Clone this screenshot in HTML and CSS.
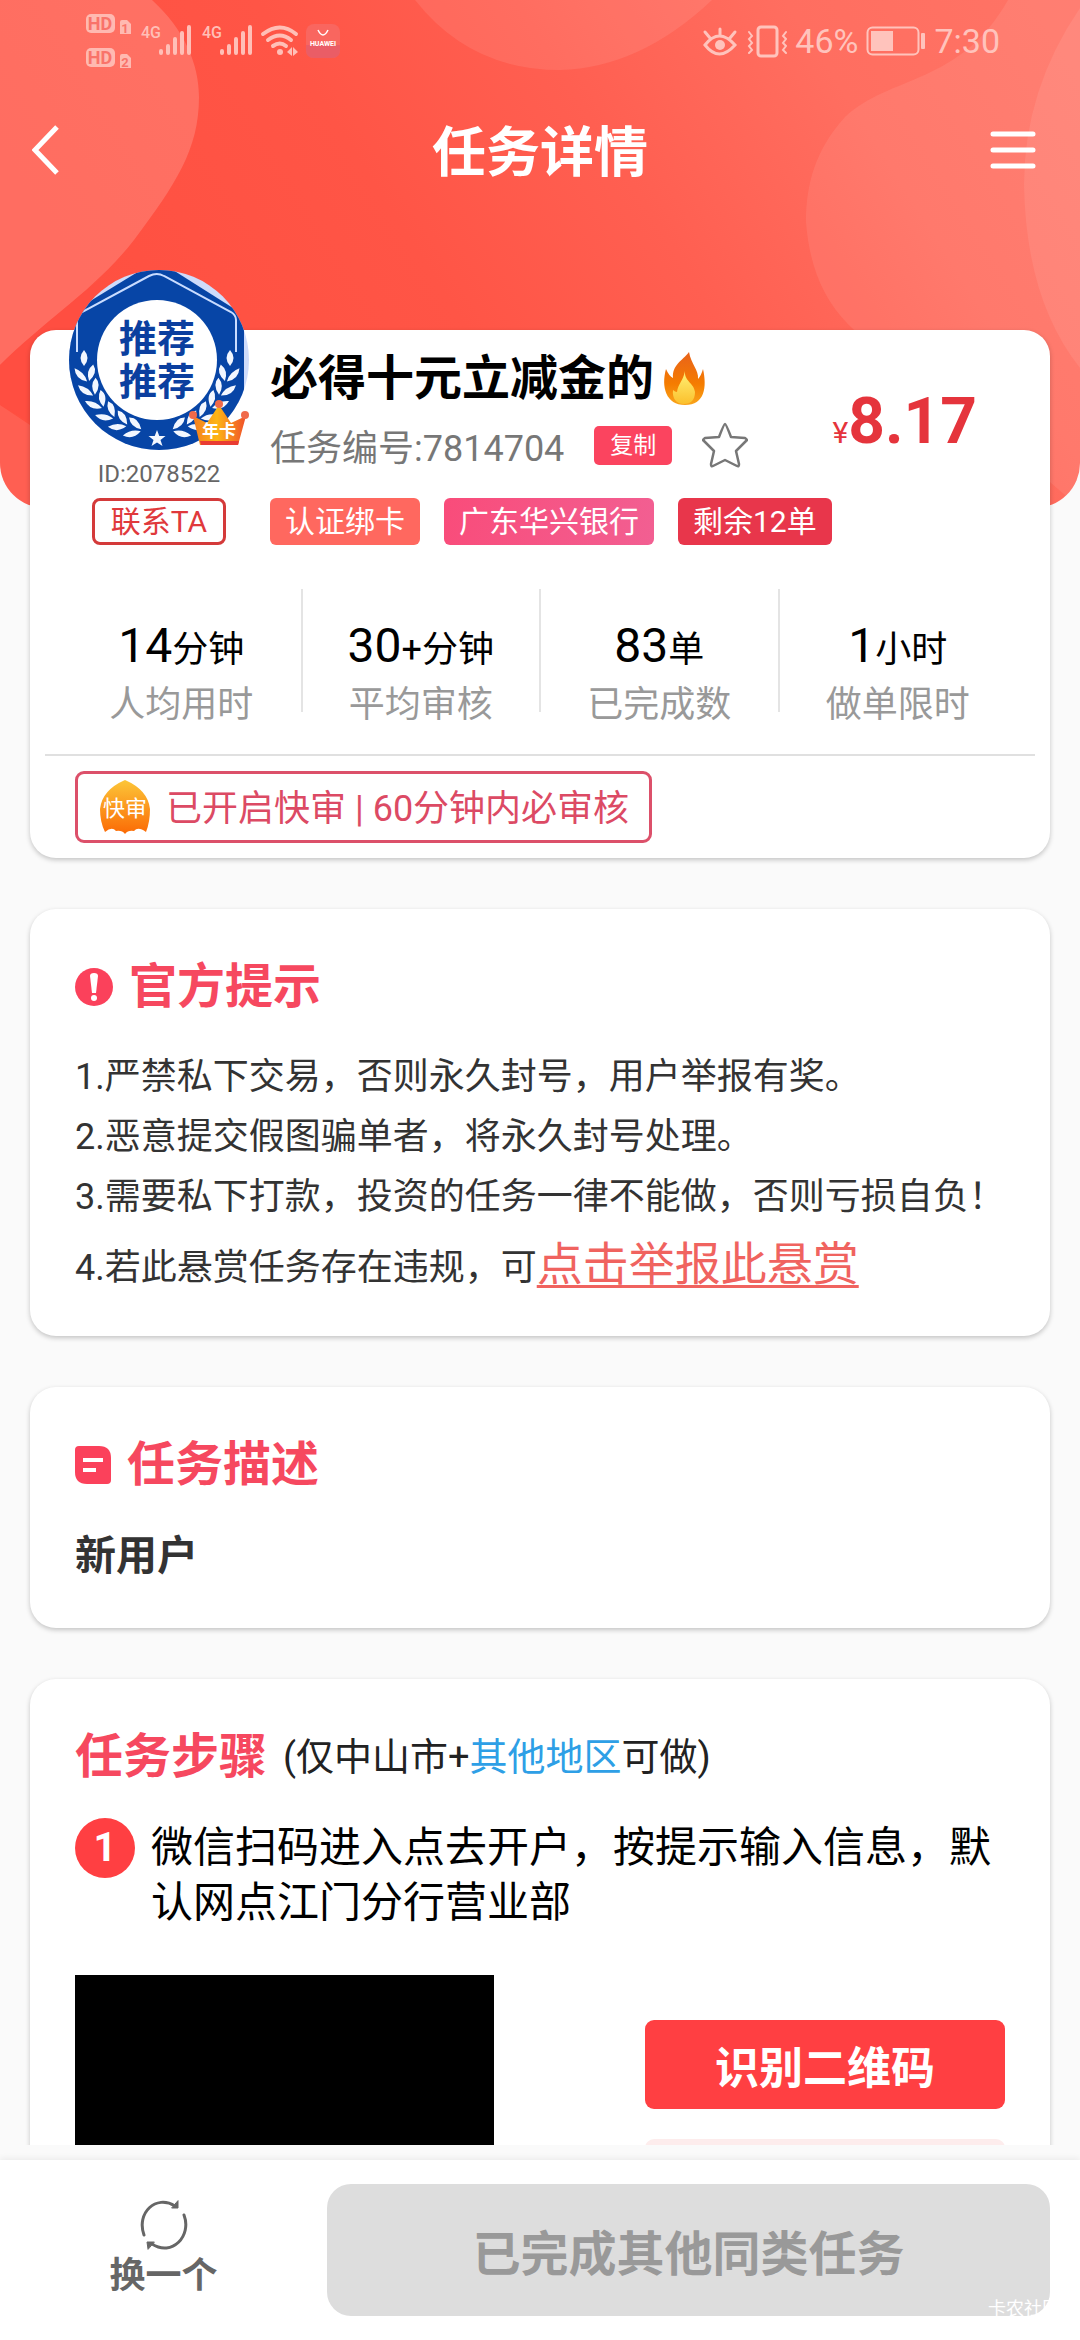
FILE: index.html
```html
<!DOCTYPE html>
<html lang="zh-CN">
<head>
<meta charset="utf-8">
<meta name="viewport" content="width=device-width, initial-scale=1">
<title>任务详情</title>
<link rel="stylesheet" href="styles.css">
</head>
<body>
<main class="scroller">
  <header class="hero">
    <svg class="hero-art" viewBox="0 0 1080 508" preserveAspectRatio="none" aria-hidden="true">
      <defs>
        <linearGradient id="base" x1="0" y1="0.3" x2="1" y2="0">
          <stop offset="0" stop-color="#ff5041"/>
          <stop offset="0.3" stop-color="#ff5546"/>
          <stop offset="0.52" stop-color="#ff5f51"/>
          <stop offset="0.75" stop-color="#ff6e60"/>
          <stop offset="1" stop-color="#ff7466"/>
        </linearGradient>
      </defs>
      <rect width="1080" height="508" fill="url(#base)"/>
      <path d="M0 0H152C185 30 199 65 199 97C199 150 175 185 134 240C95 290 45 320 0 365Z" fill="#fff" fill-opacity=".17"/>
      <path d="M0 365Q60 310 100 280V460L0 405Z" fill="#ff4b42" fill-opacity=".5"/>
      <path d="M0 405L60 445V508H0Z" fill="#fff" fill-opacity=".09"/>
      <path d="M415 0Q470 70 560 70Q640 68 712 0Z" fill="#fff" fill-opacity=".09"/>
      <path d="M1008 0C960 85 890 75 845 117C815 150 806 185 806 222C812 300 850 340 920 370L1080 508V0Z" fill="#fff" fill-opacity=".08"/>
      <path d="M1080 8Q1024 90 1024 185Q1026 300 1080 368Z" fill="#fff" fill-opacity=".08"/>
    </svg>
    <div class="status">
      <svg class="status-left" width="256" height="75" viewBox="0 0 256 75" aria-hidden="true">
        <g fill="#ffb9b1">
          <rect x="0" y="14" width="29" height="19" rx="5"/>
          <rect x="0" y="48" width="29" height="19" rx="5"/>
          <path d="M34 22q0-2 2-2h5l4 4v10H34zM34 56q0-2 2-2h5l4 4v10H34z"/>
        </g>
        <g class="status-cut"><text x="14" y="30" font-size="18" text-anchor="middle">HD</text><text x="14" y="64" font-size="18" text-anchor="middle">HD</text><text x="39" y="33" font-size="13" text-anchor="middle">1</text><text x="39" y="67" font-size="13" text-anchor="middle">2</text></g>
        <g class="status-net"><text x="55" y="38" font-size="16">4G</text><text x="116" y="38" font-size="16">4G</text></g>
        <g stroke="#ffbfb7" stroke-width="4" stroke-linecap="round">
          <path d="M75 51v2M82 46v7M89 39v14M96 33v20M103 27v26"/>
          <path d="M136 51v2M143 46v7M150 39v14M157 33v20M164 27v26"/>
        </g>
        <g fill="none" stroke="#ffbfb7" stroke-width="4" stroke-linecap="round">
          <path d="M177 34q17-13 33 0M182 40q12-9 23 0M187 46q7-5 13 0"/>
        </g>
        <circle cx="194" cy="52" r="3" fill="#ffbfb7"/>
        <path d="M206 47v9l-5-4zM207 47v9l5-4z" fill="#ffbfb7"/>
        <rect x="220" y="24" width="34" height="34" rx="8" fill="#f9665f"/>
        <path d="M220 45h34v5q0 8-8 8h-18q-8 0-8-8z" fill="#ea5d66"/>
        <path d="M232 30q5 10 10 0" fill="none" stroke="#fff" stroke-width="1.5"/>
        <text x="237" y="46" class="status-brand" text-anchor="middle" font-size="7">HUAWEI</text>
      </svg>
      <div class="status-right">
        <svg width="86" height="36" viewBox="0 0 86 36" fill="none" stroke="#ffc3bc" stroke-width="3" stroke-linecap="round" aria-hidden="true">
          <path d="M4 22Q18 4 34 22Q18 40 4 22ZM19 12V6M9 15L4 9M29 15L34 9"/>
          <circle cx="19" cy="22" r="5" fill="#ffc3bc" stroke="none"/>
          <rect x="57" y="4" width="19" height="29" rx="3"/>
          <path d="M48 9l3 4-3 3 3 4-3 3 3 4-3 3M85 9l-3 4 3 3-3 4 3 3-3 4 3 3" stroke-width="2"/>
        </svg>
        <span>46%</span>
        <svg width="60" height="32" viewBox="0 0 60 32" aria-hidden="true">
          <rect x="1.500" y="2.500" width="51" height="27" rx="5" fill="none" stroke="#ffc3bc" stroke-width="2"/>
          <rect x="5" y="6" width="22" height="20" fill="#ffc3bc"/>
          <rect x="55" y="8" width="4" height="16" rx="1" fill="#ffc3bc"/>
        </svg>
        <span>7:30</span>
      </div>
    </div>
    <nav class="nav">
      <button class="nav-btn" type="button" aria-label="返回">
        <svg width="27" height="50" viewBox="0 0 27 50" fill="none" stroke="#fff" stroke-width="5"><path d="M25 2L3 25L25 48"/></svg>
      </button>
      <h1 class="nav-title">任务详情</h1>
      <button class="nav-btn nav-menu" type="button" aria-label="菜单">
        <svg width="46" height="40" viewBox="0 0 46 40" stroke="#fff" stroke-width="5" stroke-linecap="round"><path d="M3 4H43M3 20H43M3 36H43"/></svg>
      </button>
    </nav>
  </header>

  <div class="cards">
    <section class="card summary">
      <div class="profile">
        <div class="owner">
          <svg class="avatar" width="180" height="180" viewBox="0 0 180 180" role="img" aria-label="推荐">
            <defs>
              <clipPath id="round"><circle cx="90" cy="90" r="90"/></clipPath>
              <linearGradient id="crown" x1="0" y1="0" x2="1" y2="0">
                <stop offset="0" stop-color="#f47c1f"/><stop offset="0.45" stop-color="#fdb515"/><stop offset="1" stop-color="#f0502a"/>
              </linearGradient>
              <g id="pair"><path d="M92 163Q87 174 76 172Q82 163 92 163ZM92 161Q86 150 77 153Q81 162 92 161Z"/></g>
              <g id="branch">
                <use href="#pair" transform="rotate(16 88 90)"/>
                <use href="#pair" transform="rotate(28 88 90)"/>
                <use href="#pair" transform="rotate(40 88 90)"/>
                <use href="#pair" transform="rotate(52 88 90)"/>
                <use href="#pair" transform="rotate(64 88 90)"/>
                <use href="#pair" transform="rotate(76 88 90)"/>
                <path d="M15 80Q22 88 15 96Q8 88 15 80Z"/>
              </g>
            </defs>
            <g clip-path="url(#round)">
              <rect width="180" height="180" fill="#cfdcfb"/>
              <path d="M72 0Q88-6 104 0L164 38Q175 46 175 60V180H0V44Z" fill="#0745a6"/>
              <path d="M8 82V50Q8 45 13 42L80 6Q88 2 95 6L162 42Q167 45 167 50V82" fill="none" stroke="#c9dcff" stroke-width="2"/>
              <circle cx="88" cy="90" r="60" fill="#fff"/>
              <g fill="#f2f7ff">
                <use href="#branch"/>
                <use href="#branch" transform="translate(176 0) scale(-1 1)"/>
                <path d="M88 160l2.300 6h6.200l-5 4 2 6-5.500-3.600-5.500 3.600 2-6-5-4h6.200z"/>
              </g>
            </g>
            <g class="seal-text"><text x="88" y="82" text-anchor="middle">推荐</text><text x="88" y="125" text-anchor="middle">推荐</text></g>
            <path d="M124 146L138 153L150 135L162 153L177 146L169 175H131Z" fill="url(#crown)"/>
            <path d="M131 171H170L169 175H132Z" fill="#e93c33"/>
            <g fill="#f06a4a"><circle cx="124" cy="145" r="4"/><circle cx="150" cy="134" r="4"/><circle cx="176" cy="145" r="4"/></g>
            <text class="crown-text" x="150" y="167" text-anchor="middle">年卡</text>
          </svg>
          <span class="owner-id">ID:2078522</span>
          <button class="contact" type="button">联系TA</button>
        </div>
        <div class="info">
          <div class="info-top">
            <div>
              <h2 class="task-title">必得十元立减金的<svg width="54" height="56" viewBox="0 0 54 56" aria-hidden="true">
                <defs>
                  <linearGradient id="flame" x1="0" y1="0" x2="0" y2="1"><stop offset="0" stop-color="#e8621b"/><stop offset="0.6" stop-color="#f57c00"/><stop offset="1" stop-color="#f9a51b"/></linearGradient>
                  <linearGradient id="core" x1="0" y1="0" x2="0" y2="1"><stop offset="0" stop-color="#fff176"/><stop offset="1" stop-color="#fbc02d"/></linearGradient>
                </defs>
                <path d="M35 1C37 13 45 19 44 28Q47 25 49 18C53 36 51 54 31 54C12 54 7 36 12 18Q15 25 19 27C18 14 28 10 35 1Z" fill="url(#flame)"/>
                <path d="M31 20C30 30 40 32 41 41C41 49 37 53 30 53C22 53 18 47 19 39Q21 41 23 41C24 33 29 30 31 20Z" fill="url(#core)"/>
              </svg></h2>
              <div class="task-no">
                <span>任务编号:7814704</span>
                <button class="copy" type="button">复制</button>
                <button class="fav" type="button" aria-label="收藏">
                  <svg width="46" height="46" viewBox="0 0 46 46" fill="none" stroke="#777" stroke-width="2.500" stroke-linejoin="round"><path d="M23 2Q24 2 29 15L43 16Q46 18 44 19L34 29L37 42Q37 45 35 44L23 38L11 44Q9 45 9 42L12 29L2 19Q0 18 3 16L17 15Q22 2 23 2Z"/></svg>
                </button>
              </div>
            </div>
            <p class="price"><small>¥</small>8.17</p>
          </div>
          <div class="tags">
            <span class="tag tag-coral">认证绑卡</span>
            <span class="tag tag-pink">广东华兴银行</span>
            <span class="tag tag-red">剩余12单</span>
          </div>
        </div>
      </div>
      <dl class="stats">
        <div class="stat"><dd>14<small>分钟</small></dd><dt>人均用时</dt></div>
        <div class="stat"><dd>30<small>+分钟</small></dd><dt>平均审核</dt></div>
        <div class="stat"><dd>83<small>单</small></dd><dt>已完成数</dt></div>
        <div class="stat"><dd>1<small>小时</small></dd><dt>做单限时</dt></div>
      </dl>
      <div class="quick-row">
        <p class="quick">
          <svg width="50" height="54" viewBox="0 0 50 54" aria-hidden="true">
            <defs><linearGradient id="fast" x1="0" y1="0" x2="0" y2="1"><stop offset="0" stop-color="#fcc638"/><stop offset="1" stop-color="#fb6a05"/></linearGradient></defs>
            <path d="M25 0Q48 10 50 29Q50 42 46 52Q38 46 34 51Q28 50 25 54Q22 50 16 51Q12 46 5 52Q0 42 0 29Q2 10 25 0Z" fill="url(#fast)"/>
            <text class="quick-badge" x="25" y="36" text-anchor="middle">快审</text>
          </svg>
          <span>已开启快审 | 60分钟内必审核</span>
        </p>
      </div>
    </section>

    <section class="card">
      <h2 class="heading">
        <svg width="38" height="38" viewBox="0 0 38 38" aria-hidden="true"><circle cx="19" cy="19" r="19" fill="#fb415b"/><path d="M15 8Q15 5 19 5Q23 5 23 8L21 25H17Z" fill="#fff"/><circle cx="19" cy="30" r="3" fill="#fff"/></svg>
        官方提示
      </h2>
      <ol class="rules">
        <li>1.严禁私下交易，否则永久封号，用户举报有奖。</li>
        <li>2.恶意提交假图骗单者，将永久封号处理。</li>
        <li>3.需要私下打款，投资的任务一律不能做，否则亏损自负！</li>
        <li class="rule-report">4.若此悬赏任务存在违规，可<a href="#report">点击举报此悬赏</a></li>
      </ol>
    </section>

    <section class="card">
      <h2 class="heading">
        <svg width="36" height="38" viewBox="0 0 36 38" aria-hidden="true"><path d="M4 0H24Q36 0 36 12V34Q36 38 32 38H12Q0 38 0 26V4Q0 0 4 0Z" fill="#fb415b"/><path d="M8 14H28M8 24H21" stroke="#fff" stroke-width="4"/></svg>
        任务描述
      </h2>
      <p class="desc">新用户</p>
    </section>

    <section class="card">
      <h2 class="heading">任务步骤 <span class="area">(仅中山市+<a href="#area">其他地区</a>可做)</span></h2>
      <div class="step">
        <span class="step-no">1</span>
        <p>微信扫码进入点去开户，按提示输入信息，默认网点江门分行营业部</p>
      </div>
      <div class="qr-row">
        <div class="qr"></div>
        <div class="qr-actions">
          <button class="scan" type="button">识别二维码</button>
          <button class="scan scan-pale" type="button" aria-label="保存"></button>
        </div>
      </div>
    </section>
  </div>
</main>

<footer class="footer">
  <button class="swap" type="button">
    <svg width="50" height="50" viewBox="0 0 50 50" fill="none" stroke="#666" stroke-width="3" stroke-linecap="round" aria-hidden="true"><path d="M5 35C-3 13 17-6 36 6M45 15C53 36 33 57 13 44"/><path d="M39 1V8H33ZM9 49L8 42L15 42Z" fill="#666" stroke-width="1"/></svg>
    换一个
  </button>
  <button class="done" type="button" disabled>已完成其他同类任务</button>
  <span class="watermark">卡农社区</span>
</footer>
</body>
</html>
```
FILE: styles.css
```css
* {
  box-sizing: border-box;
}

body {
  margin: 0;
  height: 100vh;
  display: flex;
  flex-direction: column;
  background: #fafafa;
  color: #333;
  font-family: Roboto, "Noto Sans CJK SC", sans-serif;
}

h1, h2, p, dl, dd, ol {
  margin: 0;
  padding: 0;
}

button {
  margin: 0;
  padding: 0;
  border: 0;
  background: none;
  font: inherit;
  color: inherit;
}

svg {
  display: block;
}

.scroller {
  flex: 1;
  min-height: 0;
  overflow-y: auto;
  scrollbar-width: none;
}

/* Hero */
.hero {
  position: relative;
  height: 508px;
  overflow: hidden;
  border-radius: 0 0 45px 45px;
}

.hero-art {
  position: absolute;
  inset: 0;
  width: 100%;
  height: 100%;
}

.status {
  position: relative;
  display: flex;
  justify-content: space-between;
  align-items: center;
  height: 75px;
  padding: 0 80px 0 86px;
}

.status-cut {
  fill: #f9736a;
  font-weight: 700;
}

.status-net {
  fill: #ffbfb7;
  font-weight: 500;
}

.status-brand {
  fill: #fff;
  font-weight: 700;
}

.status-right {
  display: flex;
  align-items: center;
  gap: 8px;
  padding-top: 6px;
  color: #ffc3bc;
  font-size: 34px;
  line-height: 40px;
}

.nav {
  position: relative;
  display: grid;
  grid-template-columns: 1fr auto 1fr;
  align-items: center;
  height: 150px;
  padding: 0 32px;
}

.nav-title {
  padding-top: 8px;
  color: #fff;
  font-size: 54px;
  line-height: 80px;
  font-weight: 700;
}

.nav-btn {
  justify-self: start;
}

.nav-menu {
  justify-self: end;
  padding-right: 12px;
}

/* Cards */
.cards {
  position: relative;
  display: flex;
  flex-direction: column;
  gap: 51px;
  margin-top: -178px;
  padding: 0 30px 51px;
}

.card {
  padding: 48px 45px 30px;
  border-radius: 26px;
  background: #fff;
  box-shadow: 0 2px 5px rgba(0, 0, 0, .22);
}

.summary {
  padding: 0 15px 15px;
}

.profile {
  display: flex;
  gap: 21px;
  padding-left: 24px;
}

.owner {
  display: flex;
  flex-direction: column;
  align-items: center;
  margin-top: -60px;
}

.seal-text {
  fill: #0b3f9f;
  font-size: 38px;
  font-weight: 700;
}

.crown-text {
  fill: #fff;
  font-size: 17px;
  font-weight: 700;
}

.owner-id {
  color: #666;
  font-size: 24px;
  line-height: 48px;
}

.contact {
  height: 47px;
  padding: 0 16px;
  border: 3px solid #d43a3a;
  border-radius: 8px;
  color: #e0393c;
  font-size: 30px;
  line-height: 41px;
}

.info {
  flex: 1;
  padding-top: 18px;
}

.info-top {
  display: flex;
  justify-content: space-between;
  padding-right: 58px;
}

.task-title {
  display: flex;
  align-items: center;
  color: #000;
  font-size: 48px;
  line-height: 62px;
  font-weight: 700;
}

.task-no {
  display: flex;
  align-items: center;
  height: 70px;
  color: #777;
  font-size: 36px;
}

.copy {
  width: 78px;
  height: 39px;
  margin: 0 30px;
  border-radius: 5px;
  background: #fb445f;
  color: #fff;
  font-size: 23px;
  line-height: 39px;
}

.price {
  padding-top: 38px;
  color: #e5343c;
  font-size: 64px;
  line-height: 72px;
  font-weight: 700;
}

.price small {
  font-size: 30px;
  font-weight: 400;
}

.tags {
  display: flex;
  gap: 24px;
  margin-top: 18px;
}

.tag {
  height: 47px;
  padding: 0 15px;
  border-radius: 6px;
  color: #fff;
  font-size: 30px;
  line-height: 48px;
}

.tag-coral {
  background: #ff685f;
}

.tag-pink {
  background: linear-gradient(100deg, #f94c7a, #f25f92);
}

.tag-red {
  background: #e8364b;
}

.stats {
  display: grid;
  grid-template-columns: repeat(4, 1fr);
  margin: 44px 19px 0 17px;
}

.stat {
  display: flex;
  flex-direction: column;
  align-items: center;
  height: 123px;
  padding-top: 24px;
}

.stat + .stat {
  border-left: 2px solid #e4e4e4;
}

.stat dd {
  color: #000;
  font-size: 48px;
  line-height: 66px;
}

.stat small {
  font-size: 36px;
}

.stat dt {
  color: #999;
  font-size: 36px;
  line-height: 44px;
}

.quick-row {
  display: flex;
  margin-top: 42px;
  padding: 15px 30px 0;
  border-top: 2px solid #e0e0e0;
}

.quick {
  display: flex;
  align-items: center;
  gap: 16px;
  height: 72px;
  padding: 0 20px 0 22px;
  border: 3px solid #dc506a;
  border-radius: 9px;
  color: #dc4a64;
  font-size: 36px;
}

.quick span {
  padding-bottom: 4px;
}

.quick-badge {
  fill: #fff;
  font-size: 22px;
  font-weight: 400;
}

.heading {
  display: flex;
  align-items: center;
  gap: 16px;
  color: #f6485f;
  font-size: 48px;
  line-height: 60px;
  font-weight: 700;
}

.rules {
  margin-top: 30px;
  list-style: none;
  font-size: 36px;
  line-height: 60px;
}

.rule-report {
  line-height: 75px;
}

.rule-report a {
  color: #f0635f;
  font-size: 46px;
  text-underline-offset: 5px;
  text-decoration-thickness: 3px;
}

.desc {
  margin-top: 31px;
  padding-bottom: 12px;
  font-size: 41px;
  line-height: 60px;
  font-weight: 700;
}

.area {
  color: #222;
  font-size: 38px;
  font-weight: 400;
}

.area a {
  color: #2e9fe6;
  text-decoration: none;
}

.step {
  display: flex;
  gap: 16px;
  margin-top: 31px;
  color: #000;
  font-size: 42px;
  line-height: 55px;
}

.step p {
  padding-top: 2px;
}

.step-no {
  flex: none;
  width: 60px;
  height: 60px;
  border-radius: 50%;
  background: #ff3f42;
  color: #fff;
  font-size: 40px;
  line-height: 60px;
  font-weight: 700;
  text-align: center;
}

.qr-row {
  display: flex;
  justify-content: space-between;
  margin-top: 45px;
}

.qr {
  width: 419px;
  height: 419px;
  background: #000;
}

.qr-actions {
  display: flex;
  flex-direction: column;
  gap: 30px;
  padding-top: 45px;
}

.scan {
  width: 360px;
  height: 89px;
  border-radius: 9px;
  background: #ff3f42;
  color: #fff;
  font-size: 44px;
  font-weight: 700;
}

.scan-pale {
  background: #fdecec;
}

/* Footer */
.footer {
  position: relative;
  display: flex;
  align-items: center;
  margin-top: 15px;
  padding: 24px 30px;
  background: #fff;
  box-shadow: 0 -2px 6px rgba(0, 0, 0, .06);
}

.swap {
  display: flex;
  flex-direction: column;
  align-items: center;
  gap: 2px;
  width: 297px;
  padding-right: 30px;
  color: #666;
  font-size: 36px;
  line-height: 48px;
  font-weight: 700;
}

.done {
  flex: 1;
  height: 132px;
  border-radius: 24px;
  background: #ddd;
  color: #999;
  font-size: 48px;
  font-weight: 700;
}

.watermark {
  position: absolute;
  right: 20px;
  bottom: 17px;
  color: #fff;
  font-size: 18px;
  line-height: 28px;
}
```
